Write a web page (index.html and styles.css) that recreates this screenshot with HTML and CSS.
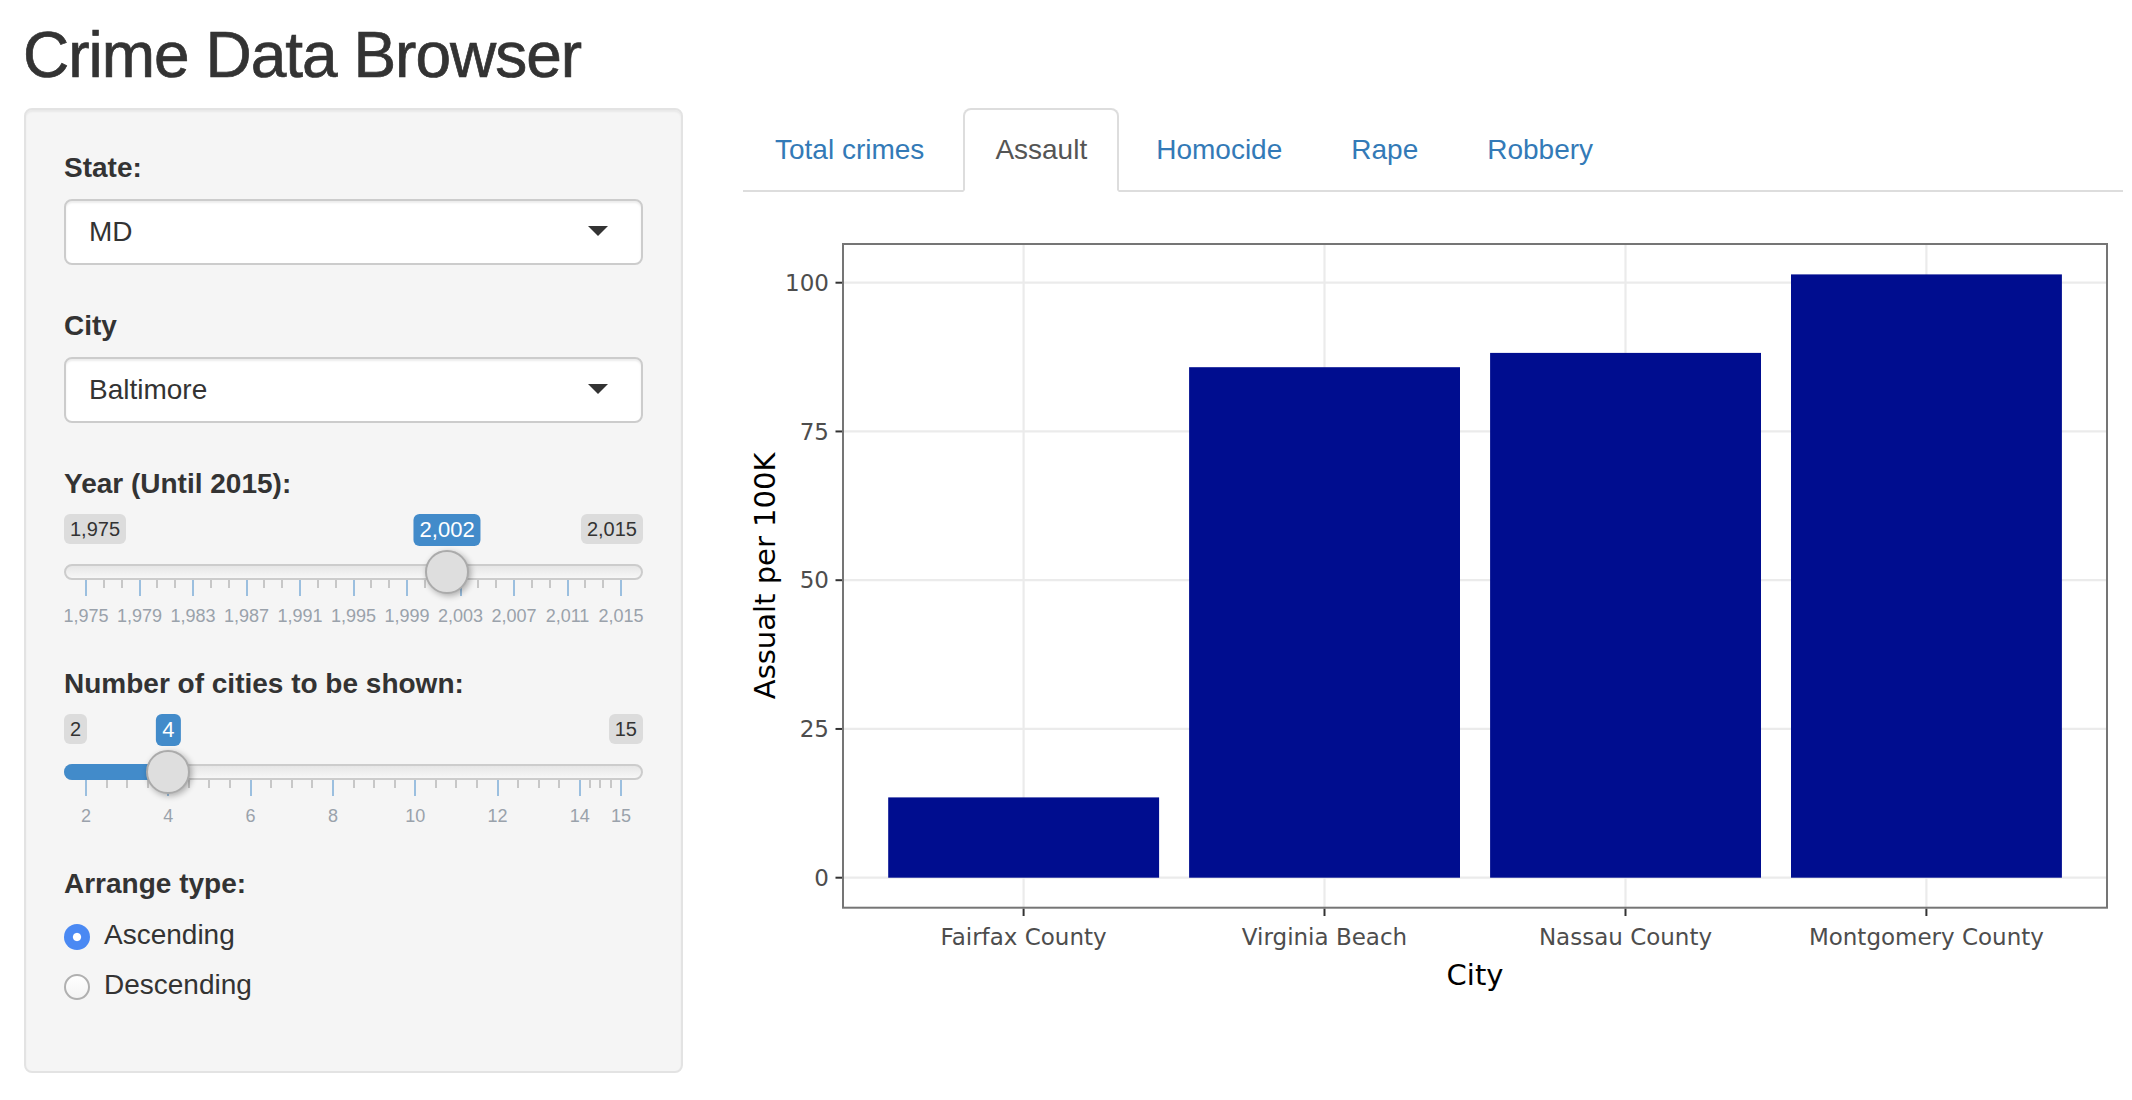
FILE: index.html
```html
<!DOCTYPE html>
<html lang="en">
<head>
<meta charset="utf-8">
<title>Crime Data Browser</title>
<link rel="stylesheet" href="styles.css">
</head>
<body>
<div class="page">
  <h1 class="title">Crime Data Browser</h1>
  <div class="layout">
    <aside class="well">
      <div class="form-group sel-group">
        <label class="control-label">State:</label>
        <div class="select"><span class="select-value">MD</span><span class="caret"></span></div>
      </div>
      <div class="form-group sel-group">
        <label class="control-label">City</label>
        <div class="select"><span class="select-value">Baltimore</span><span class="caret"></span></div>
      </div>

      <div class="form-group slider-group">
        <label class="control-label">Year (Until 2015):</label>
        <div class="irs" style="--p:67.5%">
          <span class="irs-line"></span>
          <span class="irs-min">1,975</span>
          <span class="irs-max">2,015</span>
          <div class="irs-rail">
            <div class="irs-grid">
              <span class="pol" style="left:0%"></span>
              <span class="pol small" style="left:3.333%"></span>
              <span class="pol small" style="left:6.667%"></span>
              <span class="pol" style="left:10%"></span>
              <span class="pol small" style="left:13.333%"></span>
              <span class="pol small" style="left:16.667%"></span>
              <span class="pol" style="left:20%"></span>
              <span class="pol small" style="left:23.333%"></span>
              <span class="pol small" style="left:26.667%"></span>
              <span class="pol" style="left:30%"></span>
              <span class="pol small" style="left:33.333%"></span>
              <span class="pol small" style="left:36.667%"></span>
              <span class="pol" style="left:40%"></span>
              <span class="pol small" style="left:43.333%"></span>
              <span class="pol small" style="left:46.667%"></span>
              <span class="pol" style="left:50%"></span>
              <span class="pol small" style="left:53.333%"></span>
              <span class="pol small" style="left:56.667%"></span>
              <span class="pol" style="left:60%"></span>
              <span class="pol small" style="left:63.333%"></span>
              <span class="pol small" style="left:66.667%"></span>
              <span class="pol" style="left:70%"></span>
              <span class="pol small" style="left:73.333%"></span>
              <span class="pol small" style="left:76.667%"></span>
              <span class="pol" style="left:80%"></span>
              <span class="pol small" style="left:83.333%"></span>
              <span class="pol small" style="left:86.667%"></span>
              <span class="pol" style="left:90%"></span>
              <span class="pol small" style="left:93.333%"></span>
              <span class="pol small" style="left:96.667%"></span>
              <span class="pol" style="left:100%"></span>
              <span class="gtext" style="left:0%">1,975</span>
              <span class="gtext" style="left:10%">1,979</span>
              <span class="gtext" style="left:20%">1,983</span>
              <span class="gtext" style="left:30%">1,987</span>
              <span class="gtext" style="left:40%">1,991</span>
              <span class="gtext" style="left:50%">1,995</span>
              <span class="gtext" style="left:60%">1,999</span>
              <span class="gtext" style="left:70%">2,003</span>
              <span class="gtext" style="left:80%">2,007</span>
              <span class="gtext" style="left:90%">2,011</span>
              <span class="gtext" style="left:100%">2,015</span>
            </div>
            <span class="irs-single">2,002</span>
            <span class="irs-handle"></span>
          </div>
        </div>
      </div>

      <div class="form-group slider-group">
        <label class="control-label">Number of cities to be shown:</label>
        <div class="irs" style="--p:15.385%">
          <span class="irs-line"></span>
          <span class="irs-min">2</span>
          <span class="irs-max">15</span>
          <div class="irs-rail">
            <span class="irs-bar"></span>
            <div class="irs-grid">
              <span class="pol" style="left:0%"></span>
              <span class="pol small" style="left:3.846%"></span>
              <span class="pol small" style="left:7.692%"></span>
              <span class="pol small" style="left:11.538%"></span>
              <span class="pol" style="left:15.385%"></span>
              <span class="pol small" style="left:19.231%"></span>
              <span class="pol small" style="left:23.077%"></span>
              <span class="pol small" style="left:26.923%"></span>
              <span class="pol" style="left:30.769%"></span>
              <span class="pol small" style="left:34.615%"></span>
              <span class="pol small" style="left:38.462%"></span>
              <span class="pol small" style="left:42.308%"></span>
              <span class="pol" style="left:46.154%"></span>
              <span class="pol small" style="left:50%"></span>
              <span class="pol small" style="left:53.846%"></span>
              <span class="pol small" style="left:57.692%"></span>
              <span class="pol" style="left:61.538%"></span>
              <span class="pol small" style="left:65.385%"></span>
              <span class="pol small" style="left:69.231%"></span>
              <span class="pol small" style="left:73.077%"></span>
              <span class="pol" style="left:76.923%"></span>
              <span class="pol small" style="left:80.769%"></span>
              <span class="pol small" style="left:84.615%"></span>
              <span class="pol small" style="left:88.462%"></span>
              <span class="pol" style="left:92.308%"></span>
              <span class="pol small" style="left:94.231%"></span>
              <span class="pol small" style="left:96.154%"></span>
              <span class="pol small" style="left:98.077%"></span>
              <span class="pol" style="left:100%"></span>
              <span class="gtext" style="left:0%">2</span>
              <span class="gtext" style="left:15.385%">4</span>
              <span class="gtext" style="left:30.769%">6</span>
              <span class="gtext" style="left:46.154%">8</span>
              <span class="gtext" style="left:61.538%">10</span>
              <span class="gtext" style="left:76.923%">12</span>
              <span class="gtext" style="left:92.308%">14</span>
              <span class="gtext" style="left:100%">15</span>
            </div>
            <span class="irs-single">4</span>
            <span class="irs-handle"></span>
          </div>
        </div>
      </div>

      <div class="form-group radio-block">
        <label class="control-label">Arrange type:</label>
        <label class="radio"><input type="radio" name="arrange" value="asc" checked><span>Ascending</span></label>
        <label class="radio"><input type="radio" name="arrange" value="desc"><span>Descending</span></label>
      </div>
    </aside>

    <main class="main-col">
      <ul class="nav-tabs">
        <li><a href="#">Total crimes</a></li>
        <li class="active"><a href="#">Assault</a></li>
        <li><a href="#">Homocide</a></li>
        <li><a href="#">Rape</a></li>
        <li><a href="#">Robbery</a></li>
      </ul>
      <div class="tab-content">
        <svg class="plot" width="1380" height="830" viewBox="743 192 1380 830" xmlns="http://www.w3.org/2000/svg">
          <rect x="843" y="244" width="1264" height="663.7" fill="#ffffff"/>
          <g stroke="#ebebeb" stroke-width="2.2">
            <line x1="843" x2="2107" y1="282.7" y2="282.7"/>
            <line x1="843" x2="2107" y1="431.45" y2="431.45"/>
            <line x1="843" x2="2107" y1="580.2" y2="580.2"/>
            <line x1="843" x2="2107" y1="728.95" y2="728.95"/>
            <line x1="843" x2="2107" y1="877.7" y2="877.7"/>
            <line x1="1023.6" x2="1023.6" y1="244" y2="907.7"/>
            <line x1="1324.5" x2="1324.5" y1="244" y2="907.7"/>
            <line x1="1625.5" x2="1625.5" y1="244" y2="907.7"/>
            <line x1="1926.4" x2="1926.4" y1="244" y2="907.7"/>
          </g>
          <g fill="#000d8f">
            <rect x="888.2" y="797.4" width="270.9" height="80.3"/>
            <rect x="1189.1" y="367.2" width="270.9" height="510.5"/>
            <rect x="1490.1" y="352.9" width="270.9" height="524.8"/>
            <rect x="1791" y="274.4" width="270.9" height="603.3"/>
          </g>
          <rect x="843" y="244" width="1264" height="663.7" fill="none" stroke="#757575" stroke-width="2"/>
          <g stroke="#333333" stroke-width="2">
            <line x1="835.5" x2="842" y1="282.7" y2="282.7"/>
            <line x1="835.5" x2="842" y1="431.45" y2="431.45"/>
            <line x1="835.5" x2="842" y1="580.2" y2="580.2"/>
            <line x1="835.5" x2="842" y1="728.95" y2="728.95"/>
            <line x1="835.5" x2="842" y1="877.7" y2="877.7"/>
            <line x1="1023.6" x2="1023.6" y1="908.7" y2="916"/>
            <line x1="1324.5" x2="1324.5" y1="908.7" y2="916"/>
            <line x1="1625.5" x2="1625.5" y1="908.7" y2="916"/>
            <line x1="1926.4" x2="1926.4" y1="908.7" y2="916"/>
          </g>
          <g class="tick-label" text-anchor="end">
            <text x="829" y="282.7" dy="0.36em">100</text>
            <text x="829" y="431.45" dy="0.36em">75</text>
            <text x="829" y="580.2" dy="0.36em">50</text>
            <text x="829" y="728.95" dy="0.36em">25</text>
            <text x="829" y="877.7" dy="0.36em">0</text>
          </g>
          <g class="tick-label" text-anchor="middle">
            <text x="1023.6" y="945">Fairfax County</text>
            <text x="1324.5" y="945">Virginia Beach</text>
            <text x="1625.5" y="945">Nassau County</text>
            <text x="1926.4" y="945">Montgomery County</text>
          </g>
          <text class="axis-title" x="1475" y="985" text-anchor="middle">City</text>
          <text class="axis-title" transform="translate(774.5 575.9) rotate(-90)" text-anchor="middle">Assualt per 100K</text>
        </svg>
      </div>
    </main>
  </div>
</div>
</body>
</html>
```

FILE: styles.css
```css
* { box-sizing: border-box; }

html, body {
  margin: 0;
  padding: 0;
  background: #ffffff;
}

body {
  font-family: "Liberation Sans", Arial, Helvetica, sans-serif;
  color: #333333;
  font-size: 28px;
  line-height: 40px;
}

.page {
  padding: 0 9px 0 24px;
}

.title {
  margin: 0 0 15px -1px;
  padding-top: 17px;
  font-size: 64px;
  line-height: 76px;
  letter-spacing: -1px;
  font-weight: 400;
  color: #333333;
  -webkit-text-stroke: 0.7px #333333;
}

.layout {
  display: flex;
  align-items: flex-start;
  gap: 60px;
}

/* ---------- sidebar ---------- */
.well {
  width: 659px;
  flex: none;
  background: #f5f5f5;
  border: 2px solid #e3e3e3;
  border-radius: 8px;
  padding: 38px 38px 66px;
  box-shadow: inset 0 2px 2px rgba(0, 0, 0, 0.05);
}

.control-label {
  display: block;
  font-weight: 700;
  line-height: 40px;
  margin-bottom: 11px;
}

.sel-group { margin-bottom: 41px; }

.select {
  position: relative;
  height: 66px;
  background: #ffffff;
  border: 2px solid #cccccc;
  border-radius: 8px;
  padding: 11px 24px 11px 23px;
  line-height: 40px;
  box-shadow: inset 0 2px 2px rgba(0, 0, 0, 0.075);
}

.caret {
  position: absolute;
  right: 33px;
  top: 50%;
  margin-top: -6px;
  width: 0;
  height: 0;
  border-style: solid;
  border-width: 10px 10px 0;
  border-color: #333333 transparent transparent;
}

/* ---------- sliders ---------- */
.slider-group { margin-bottom: 40px; }
.slider-group .control-label { margin-bottom: 10px; }

.irs {
  position: relative;
  height: 110px;
}

.irs-line {
  position: absolute;
  left: 0;
  right: 0;
  top: 50px;
  height: 16px;
  border: 2px solid #cccccc;
  border-radius: 16px;
  background: linear-gradient(to bottom, #dedede -50%, #ffffff 150%);
}

.irs-min,
.irs-max {
  position: absolute;
  top: 0;
  font-size: 20px;
  line-height: 26px;
  padding: 2px 6px;
  border-radius: 6px;
  background: rgba(0, 0, 0, 0.1);
  color: #333333;
}

.irs-min { left: 0; }
.irs-max { right: 0; }

.irs-rail {
  position: absolute;
  left: 22px;
  right: 22px;
  top: 0;
  bottom: 0;
}

.irs-bar {
  position: absolute;
  left: -22px;
  top: 50px;
  height: 16px;
  width: calc(var(--p) + 22px);
  background: #428bca;
  border-radius: 16px 0 0 16px;
}

.irs-single {
  position: absolute;
  top: 0;
  left: var(--p);
  transform: translateX(-50%);
  font-size: 22px;
  line-height: 28px;
  padding: 2px 6px;
  border-radius: 6px;
  background: #428bca;
  color: #ffffff;
  white-space: nowrap;
}

.irs-handle {
  position: absolute;
  top: 35.5px;
  left: var(--p);
  width: 44px;
  height: 44px;
  margin-left: -22px;
  border-radius: 50%;
  border: 2px solid #ababab;
  background: #dedede;
  box-shadow: 2px 2px 6px rgba(0, 0, 0, 0.3);
  z-index: 2;
}

.irs-grid {
  position: absolute;
  left: 0;
  right: 0;
  top: 66px;
  height: 44px;
}

.pol {
  position: absolute;
  top: 0;
  width: 2px;
  margin-left: -1px;
  height: 16px;
  background: #9bbfdf;
}

.pol.small {
  height: 8px;
  background: #c7c7c7;
}

.gtext {
  position: absolute;
  top: 26px;
  transform: translateX(-50%);
  font-size: 18px;
  line-height: 20px;
  color: #9aa2ab;
  white-space: nowrap;
}

/* ---------- radios ---------- */
.radio {
  display: flex;
  align-items: flex-start;
  line-height: 40px;
  font-weight: 400;
  cursor: pointer;
}

.radio + .radio { margin-top: 10px; }

.radio input {
  -webkit-appearance: none;
  appearance: none;
  flex: none;
  margin: 9px 14px 0 0;
  width: 26px;
  height: 26px;
  border-radius: 50%;
  border: 2px solid #b0b0b0;
  background: linear-gradient(#ffffff, #f4f4f4);
}

.radio input:checked {
  border: none;
  background: radial-gradient(circle, #ffffff 0 3.6px, #4a89f3 4.6px);
}

/* ---------- tabs ---------- */
.main-col {
  width: 1380px;
  flex: none;
}

.nav-tabs {
  display: flex;
  list-style: none;
  margin: 0;
  padding: 0;
  border-bottom: 2px solid #dddddd;
}

.nav-tabs li {
  margin-bottom: -2px;
  margin-right: 5px;
}

.nav-tabs li:first-child a {
  padding-right: 32px;
}

.nav-tabs a {
  display: block;
  padding: 20px 30px;
  line-height: 40px;
  border: 2px solid transparent;
  border-radius: 8px 8px 0 0;
  color: #337ab7;
  text-decoration: none;
}

.nav-tabs li.active a {
  color: #555555;
  background: #ffffff;
  border-color: #dddddd #dddddd transparent;
}

/* ---------- plot ---------- */
.plot { display: block; }

.plot text {
  font-family: "DejaVu Sans", Verdana, sans-serif;
}

.tick-label text {
  font-size: 23px;
  fill: #4d4d4d;
}

.axis-title {
  font-size: 29px;
  fill: #000000;
}
```
